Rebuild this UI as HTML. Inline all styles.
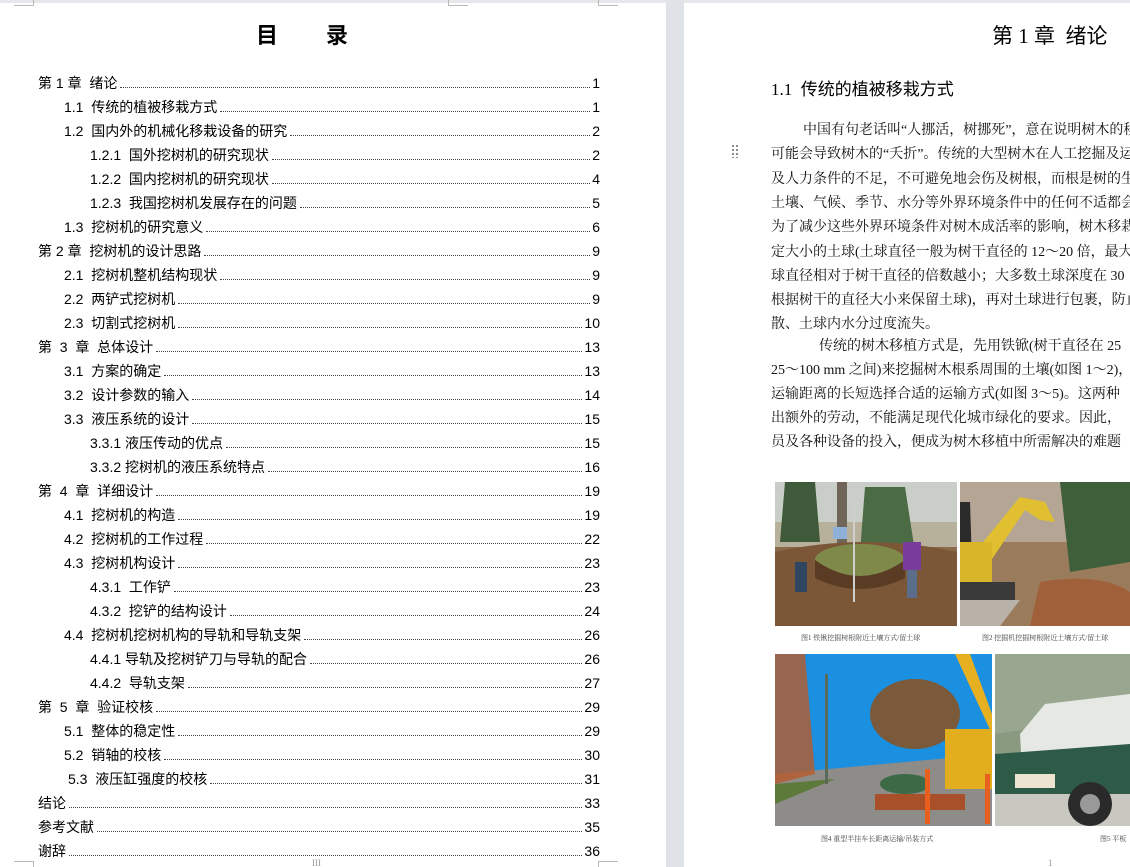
<!DOCTYPE html>
<html><head><meta charset="utf-8">
<style>
*{margin:0;padding:0;box-sizing:border-box}
html,body{width:1130px;height:867px;overflow:hidden;background:#fff}
body{position:relative;font-family:"Liberation Serif","Noto Sans CJK SC",serif;color:#000}
.cjk{font-family:"Liberation Serif","Noto Sans CJK SC",sans-serif}
#gap{position:absolute;left:666px;top:0;width:18px;height:867px;background:#dfe3e8}
#topline{position:absolute;left:0;top:0;width:1130px;height:3px;background:#e6e7ea}
.mark{position:absolute;border-color:#b8b8b8;border-style:solid;width:20px;height:6px}
.toc{position:absolute;left:0;width:600px;height:20px;display:flex;align-items:flex-end;font-size:14px;line-height:20px;font-family:"Liberation Sans","Noto Sans CJK SC",sans-serif;white-space:nowrap}
.toc .t{flex:none}
.toc .d{flex:1;border-bottom:1px dotted #444;margin:0 2px 5px 3px;height:1px}
.toc .n{flex:none;font-family:"Liberation Sans",sans-serif}
.p{position:absolute;left:771px;font-size:14px;white-space:nowrap;line-height:20px;font-family:"Liberation Serif","Noto Serif CJK SC","Noto Sans CJK SC",serif;color:#111}
.cap{position:absolute;font-size:7px;color:#444;white-space:nowrap;font-family:"Liberation Serif","Noto Serif CJK SC",serif}
</style></head><body>
<div id="topline"></div>
<div id="gap"></div>
<div class="mark" style="left:14px;top:0;border-width:0 1px 1px 0"></div>
<div class="mark" style="left:448px;top:0;border-width:0 0 1px 1px"></div>
<div class="mark" style="left:598px;top:0;border-width:0 0 1px 1px"></div>
<div class="mark" style="left:14px;top:861px;border-width:1px 1px 0 0"></div>
<div class="mark" style="left:598px;top:861px;border-width:1px 0 0 1px"></div>

<div style="position:absolute;left:256px;top:18px;font-size:22px;font-weight:bold;font-family:'Noto Sans CJK SC',sans-serif;letter-spacing:0">目<span style="display:inline-block;width:48px"></span>录</div>

<div class="toc" style="top:73px;padding-left:38px"><span class="t">第 1 章&nbsp; 绪论</span><span class="d"></span><span class="n">1</span></div>
<div class="toc" style="top:97px;padding-left:64px"><span class="t">1.1&nbsp; 传统的植被移栽方式</span><span class="d"></span><span class="n">1</span></div>
<div class="toc" style="top:121px;padding-left:64px"><span class="t">1.2&nbsp; 国内外的机械化移栽设备的研究</span><span class="d"></span><span class="n">2</span></div>
<div class="toc" style="top:145px;padding-left:90px"><span class="t">1.2.1&nbsp; 国外挖树机的研究现状</span><span class="d"></span><span class="n">2</span></div>
<div class="toc" style="top:169px;padding-left:90px"><span class="t">1.2.2&nbsp; 国内挖树机的研究现状</span><span class="d"></span><span class="n">4</span></div>
<div class="toc" style="top:193px;padding-left:90px"><span class="t">1.2.3&nbsp; 我国挖树机发展存在的问题</span><span class="d"></span><span class="n">5</span></div>
<div class="toc" style="top:217px;padding-left:64px"><span class="t">1.3&nbsp; 挖树机的研究意义</span><span class="d"></span><span class="n">6</span></div>
<div class="toc" style="top:241px;padding-left:38px"><span class="t">第 2 章&nbsp; 挖树机的设计思路</span><span class="d"></span><span class="n">9</span></div>
<div class="toc" style="top:265px;padding-left:64px"><span class="t">2.1&nbsp; 挖树机整机结构现状</span><span class="d"></span><span class="n">9</span></div>
<div class="toc" style="top:289px;padding-left:64px"><span class="t">2.2&nbsp; 两铲式挖树机</span><span class="d"></span><span class="n">9</span></div>
<div class="toc" style="top:313px;padding-left:64px"><span class="t">2.3&nbsp; 切割式挖树机</span><span class="d"></span><span class="n">10</span></div>
<div class="toc" style="top:337px;padding-left:38px"><span class="t">第&nbsp; 3&nbsp; 章&nbsp; 总体设计</span><span class="d"></span><span class="n">13</span></div>
<div class="toc" style="top:361px;padding-left:64px"><span class="t">3.1&nbsp; 方案的确定</span><span class="d"></span><span class="n">13</span></div>
<div class="toc" style="top:385px;padding-left:64px"><span class="t">3.2&nbsp; 设计参数的输入</span><span class="d"></span><span class="n">14</span></div>
<div class="toc" style="top:409px;padding-left:64px"><span class="t">3.3&nbsp; 液压系统的设计</span><span class="d"></span><span class="n">15</span></div>
<div class="toc" style="top:433px;padding-left:90px"><span class="t">3.3.1 液压传动的优点</span><span class="d"></span><span class="n">15</span></div>
<div class="toc" style="top:457px;padding-left:90px"><span class="t">3.3.2 挖树机的液压系统特点</span><span class="d"></span><span class="n">16</span></div>
<div class="toc" style="top:481px;padding-left:38px"><span class="t">第&nbsp; 4&nbsp; 章&nbsp; 详细设计</span><span class="d"></span><span class="n">19</span></div>
<div class="toc" style="top:505px;padding-left:64px"><span class="t">4.1&nbsp; 挖树机的构造</span><span class="d"></span><span class="n">19</span></div>
<div class="toc" style="top:529px;padding-left:64px"><span class="t">4.2&nbsp; 挖树机的工作过程</span><span class="d"></span><span class="n">22</span></div>
<div class="toc" style="top:553px;padding-left:64px"><span class="t">4.3&nbsp; 挖树机构设计</span><span class="d"></span><span class="n">23</span></div>
<div class="toc" style="top:577px;padding-left:90px"><span class="t">4.3.1&nbsp; 工作铲</span><span class="d"></span><span class="n">23</span></div>
<div class="toc" style="top:601px;padding-left:90px"><span class="t">4.3.2&nbsp; 挖铲的结构设计</span><span class="d"></span><span class="n">24</span></div>
<div class="toc" style="top:625px;padding-left:64px"><span class="t">4.4&nbsp; 挖树机挖树机构的导轨和导轨支架</span><span class="d"></span><span class="n">26</span></div>
<div class="toc" style="top:649px;padding-left:90px"><span class="t">4.4.1 导轨及挖树铲刀与导轨的配合</span><span class="d"></span><span class="n">26</span></div>
<div class="toc" style="top:673px;padding-left:90px"><span class="t">4.4.2&nbsp; 导轨支架</span><span class="d"></span><span class="n">27</span></div>
<div class="toc" style="top:697px;padding-left:38px"><span class="t">第&nbsp; 5&nbsp; 章&nbsp; 验证校核</span><span class="d"></span><span class="n">29</span></div>
<div class="toc" style="top:721px;padding-left:64px"><span class="t">5.1&nbsp; 整体的稳定性</span><span class="d"></span><span class="n">29</span></div>
<div class="toc" style="top:745px;padding-left:64px"><span class="t">5.2&nbsp; 销轴的校核</span><span class="d"></span><span class="n">30</span></div>
<div class="toc" style="top:769px;padding-left:68px"><span class="t">5.3&nbsp; 液压缸强度的校核</span><span class="d"></span><span class="n">31</span></div>
<div class="toc" style="top:793px;padding-left:38px"><span class="t">结论</span><span class="d"></span><span class="n">33</span></div>
<div class="toc" style="top:817px;padding-left:38px"><span class="t">参考文献</span><span class="d"></span><span class="n">35</span></div>
<div class="toc" style="top:841px;padding-left:38px"><span class="t">谢辞</span><span class="d"></span><span class="n">36</span></div>
<div style="position:absolute;left:312px;top:858px;font-size:9px;color:#999">III</div>

<!-- right page -->
<div style="position:absolute;left:992px;top:20px;font-size:21px;font-family:'Liberation Serif','Noto Sans CJK SC',sans-serif;white-space:nowrap">第 1 章&nbsp; 绪论</div>
<div style="position:absolute;left:771px;top:75px;font-size:17px;font-family:'Liberation Serif','Noto Sans CJK SC',sans-serif;white-space:nowrap">1.1&nbsp; 传统的植被移栽方式</div>
<div style="position:absolute;left:731px;top:144px;width:8px;height:14px;background:radial-gradient(circle,#888 1px,transparent 1.3px) 0 0/4px 4px"></div>

<div class="p" style="top:121px;left:803px">中国有句老话叫“人挪活，树挪死”，意在说明树木的移栽</div>
<div class="p" style="top:145px">可能会导致树木的“夭折”。传统的大型树木在人工挖掘及运输</div>
<div class="p" style="top:170px">及人力条件的不足，不可避免地会伤及树根，而根是树的生命</div>
<div class="p" style="top:194px">土壤、气候、季节、水分等外界环境条件中的任何不适都会</div>
<div class="p" style="top:218px">为了减少这些外界环境条件对树木成活率的影响，树木移栽时</div>
<div class="p" style="top:243px">定大小的土球(土球直径一般为树干直径的 12～20 倍，最大</div>
<div class="p" style="top:267px">球直径相对于树干直径的倍数越小；大多数土球深度在 30</div>
<div class="p" style="top:291px">根据树干的直径大小来保留土球)，再对土球进行包裹，防止</div>
<div class="p" style="top:315px">散、土球内水分过度流失。</div>
<div class="p" style="top:337px;left:819px">传统的树木移植方式是，先用铁锨(树干直径在 25</div>
<div class="p" style="top:361px">25～100 mm 之间)来挖掘树木根系周围的土壤(如图 1～2)，</div>
<div class="p" style="top:385px">运输距离的长短选择合适的运输方式(如图 3～5)。这两种</div>
<div class="p" style="top:409px">出额外的劳动，不能满足现代化城市绿化的要求。因此，</div>
<div class="p" style="top:433px">员及各种设备的投入，便成为树木移植中所需解决的难题</div>

<!-- photo 1 -->
<svg style="position:absolute;left:775px;top:482px" width="182" height="144" viewBox="0 0 182 144">
<rect width="182" height="144" fill="#8a6a4a"/>
<rect width="182" height="50" fill="#c9cfc8"/>
<rect y="40" width="182" height="25" fill="#b7b09a"/>
<path d="M10 0 L40 0 L45 60 L5 60Z" fill="#3f5a3a"/>
<path d="M90 5 L130 5 L140 70 L85 70Z" fill="#4a6b44"/>
<rect x="62" y="0" width="10" height="70" fill="#6f6558"/>
<path d="M0 70 Q90 50 182 70 L182 144 L0 144Z" fill="#7b5637"/>
<ellipse cx="85" cy="78" rx="45" ry="16" fill="#7f8a4a"/>
<path d="M40 78 Q85 110 130 78 L130 96 Q85 118 40 96Z" fill="#5a3c25"/>
<rect x="20" y="80" width="12" height="30" fill="#2f4560"/>
<rect x="128" y="60" width="18" height="28" fill="#7a3c9a"/>
<rect x="132" y="88" width="10" height="28" fill="#5a6e8a"/>
<rect x="58" y="45" width="14" height="12" fill="#8fb0d8"/>
<rect x="78" y="20" width="2" height="100" fill="#cfcfcf"/>
</svg>
<!-- photo 2 -->
<svg style="position:absolute;left:960px;top:482px" width="170" height="144" viewBox="0 0 170 144">
<rect width="170" height="144" fill="#9a7c5c"/>
<rect width="170" height="60" fill="#b5a595"/>
<path d="M100 0 L170 0 L170 80 L110 90Z" fill="#3f5e3a"/>
<path d="M0 20 L10 20 L12 80 L0 80Z" fill="#2a2a2a"/>
<path d="M15 70 L60 15 L85 20 L95 40 L80 38 L65 28 L30 80Z" fill="#e0c030"/>
<rect x="0" y="60" width="32" height="40" fill="#d8b628"/>
<rect x="0" y="100" width="55" height="18" fill="#3a3a3a"/>
<path d="M0 118 L60 118 L40 144 L0 144Z" fill="#b8b2a8"/>
<path d="M80 100 Q140 90 170 110 L170 144 L70 144Z" fill="#a0603a"/>
</svg>
<div class="cap" style="left:801px;top:633px">图1 铁锹挖掘树根附近土壤方式/留土球</div>
<div class="cap" style="left:982px;top:633px">图2 挖掘机挖掘树根附近土壤方式/留土球</div>
<!-- photo 3 -->
<svg style="position:absolute;left:775px;top:654px" width="217" height="172" viewBox="0 0 217 172">
<rect width="217" height="172" fill="#1b8fe0"/>
<path d="M0 120 L217 100 L217 172 L0 172Z" fill="#8d8c88"/>
<path d="M0 130 L60 125 L0 150Z" fill="#5e7a3a"/>
<path d="M0 0 L30 0 L40 120 L0 130Z" fill="#b85a2a" opacity=".8"/>
<ellipse cx="140" cy="60" rx="45" ry="35" fill="#7a5a3a"/>
<ellipse cx="130" cy="130" rx="25" ry="10" fill="#3d6a46"/>
<path d="M180 0 L195 0 L217 60 L217 80Z" fill="#e6b020"/>
<rect x="170" y="75" width="47" height="60" fill="#e2ae1e"/>
<rect x="100" y="140" width="90" height="16" fill="#a8502a"/>
<rect x="150" y="115" width="5" height="55" fill="#e86020"/>
<rect x="210" y="120" width="5" height="50" fill="#e86020"/>
<rect x="50" y="20" width="3" height="110" fill="#5a6a5a"/>
</svg>
<!-- photo 4 -->
<svg style="position:absolute;left:995px;top:654px" width="135" height="172" viewBox="0 0 135 172">
<rect width="135" height="172" fill="#8a9a80"/>
<path d="M0 0 L135 0 L135 60 L0 80Z" fill="#9aa790"/>
<path d="M50 50 L135 40 L135 170 L30 172 L25 80Z" fill="#e6e8e4"/>
<path d="M0 100 L135 90 L135 140 L0 150Z" fill="#2e5a48"/>
<rect x="0" y="140" width="135" height="32" fill="#c8c8c0"/>
<circle cx="95" cy="150" r="22" fill="#2a2a2a"/>
<circle cx="95" cy="150" r="10" fill="#999"/>
<rect x="20" y="120" width="40" height="14" fill="#ece4d0"/>
</svg>
<div class="cap" style="left:821px;top:834px">图4 重型半挂车长距离运输/吊装方式</div>
<div class="cap" style="left:1100px;top:834px">图5 平板</div>
<div style="position:absolute;left:1048px;top:858px;font-size:9px;color:#999">1</div>
</body></html>
